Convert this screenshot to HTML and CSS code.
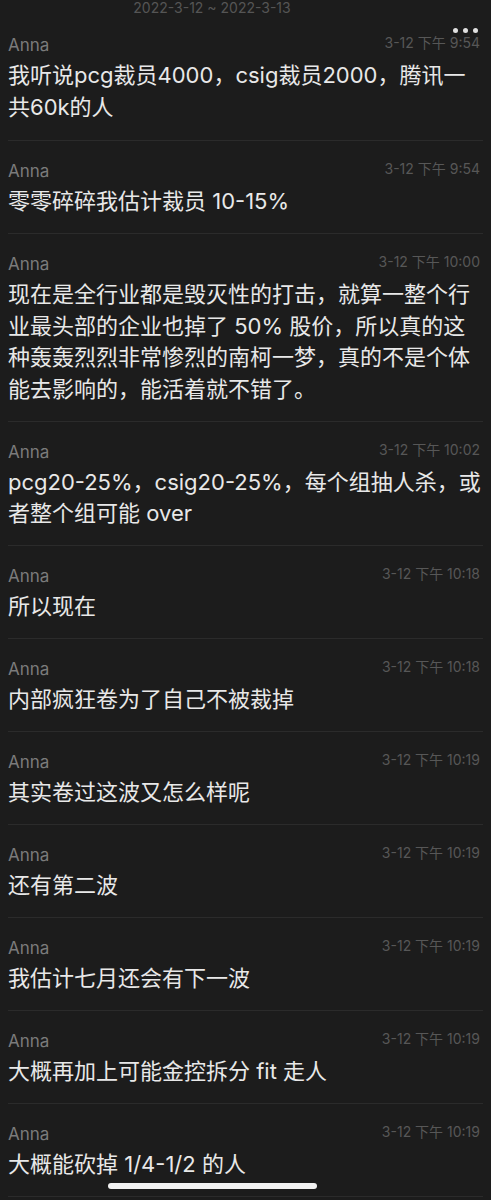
FILE: index.html
```html
<!DOCTYPE html>
<html lang="zh-CN">
  <head>
    <meta charset="UTF-8" />
    <meta name="viewport" content="width=device-width, initial-scale=1.0" />
    <title>聊天记录</title>
    <link rel="stylesheet" href="styles.css">
  </head>
  <body>
    <div id="history">
      <div class="range">2022-3-12 ~ 2022-3-13</div>
      <div class="more">
        <span class="dot"></span><span class="dot"></span><span class="dot"></span>
      </div>
      <ul id="messages">
        <li class="message first">
          <div class="meta"><span class="name">Anna</span><span class="time">3-12 下午 9:54</span></div>
          <p class="text">我听说pcg裁员4000，csig裁员2000，腾讯一共60k的人</p>
        </li>
        <li class="message">
          <div class="meta"><span class="name">Anna</span><span class="time">3-12 下午 9:54</span></div>
          <p class="text">零零碎碎我估计裁员 10-15%</p>
        </li>
        <li class="message">
          <div class="meta"><span class="name">Anna</span><span class="time">3-12 下午 10:00</span></div>
          <p class="text">现在是全行业都是毁灭性的打击，就算一整个行业最头部的企业也掉了 50% 股价，所以真的这种轰轰烈烈非常惨烈的南柯一梦，真的不是个体能去影响的，能活着就不错了。</p>
        </li>
        <li class="message">
          <div class="meta"><span class="name">Anna</span><span class="time">3-12 下午 10:02</span></div>
          <p class="text">pcg20-25%，csig20-25%，每个组抽人杀，或者整个组可能 over</p>
        </li>
        <li class="message">
          <div class="meta"><span class="name">Anna</span><span class="time">3-12 下午 10:18</span></div>
          <p class="text">所以现在</p>
        </li>
        <li class="message">
          <div class="meta"><span class="name">Anna</span><span class="time">3-12 下午 10:18</span></div>
          <p class="text">内部疯狂卷为了自己不被裁掉</p>
        </li>
        <li class="message">
          <div class="meta"><span class="name">Anna</span><span class="time">3-12 下午 10:19</span></div>
          <p class="text">其实卷过这波又怎么样呢</p>
        </li>
        <li class="message">
          <div class="meta"><span class="name">Anna</span><span class="time">3-12 下午 10:19</span></div>
          <p class="text">还有第二波</p>
        </li>
        <li class="message">
          <div class="meta"><span class="name">Anna</span><span class="time">3-12 下午 10:19</span></div>
          <p class="text">我估计七月还会有下一波</p>
        </li>
        <li class="message">
          <div class="meta"><span class="name">Anna</span><span class="time">3-12 下午 10:19</span></div>
          <p class="text">大概再加上可能金控拆分 fit 走人</p>
        </li>
        <li class="message">
          <div class="meta"><span class="name">Anna</span><span class="time">3-12 下午 10:19</span></div>
          <p class="text">大概能砍掉 1/4-1/2 的人</p>
        </li>
      </ul>
    </div>
    <div class="home-bar"></div>
  </body>
</html>
```

FILE: styles.css
```css
body {
  font-family: Inter, "Noto Sans CJK SC", sans-serif;
  background-color: #1c1c1c;
  margin: 0;
  height: 1200px;
  overflow: hidden;
  position: relative;
}
#history {
  padding: 0 8px;
}
.range {
  text-align: center;
  font-size: 14px;
  line-height: 16px;
  color: #555;
  padding-right: 67px;
}
.more {
  display: flex;
  justify-content: flex-end;
  align-items: center;
  gap: 5px;
  height: 8px;
  margin-top: 10px;
  margin-right: 5px;
}
.dot {
  width: 5px;
  height: 5px;
  border-radius: 50%;
  background: #e0e0e0;
}
#messages {
  list-style-type: none;
  margin: 0;
  padding: 0;
}
.message {
  padding: 19px 0 15.5px;
  border-bottom: 1px solid #2b2b2b;
}
.message.first {
  padding-top: 0;
  padding-bottom: 17px;
}
.meta {
  display: flex;
  justify-content: space-between;
  align-items: flex-start;
  height: 22px;
  margin-bottom: 4px;
}
.name {
  font-size: 17px;
  line-height: 22px;
  color: #7b7b7b;
}
.time {
  font-size: 14px;
  line-height: 18px;
  color: #575757;
  margin-right: 3px;
}
.text {
  margin: 0;
  padding-right: 2px;
  font-size: 22px;
  line-height: 31.5px;
  color: #e8e8e8;
}
.home-bar {
  position: absolute;
  left: 108px;
  top: 1183px;
  width: 209px;
  height: 6px;
  border-radius: 3px;
  background: #f2f2f2;
}
```
